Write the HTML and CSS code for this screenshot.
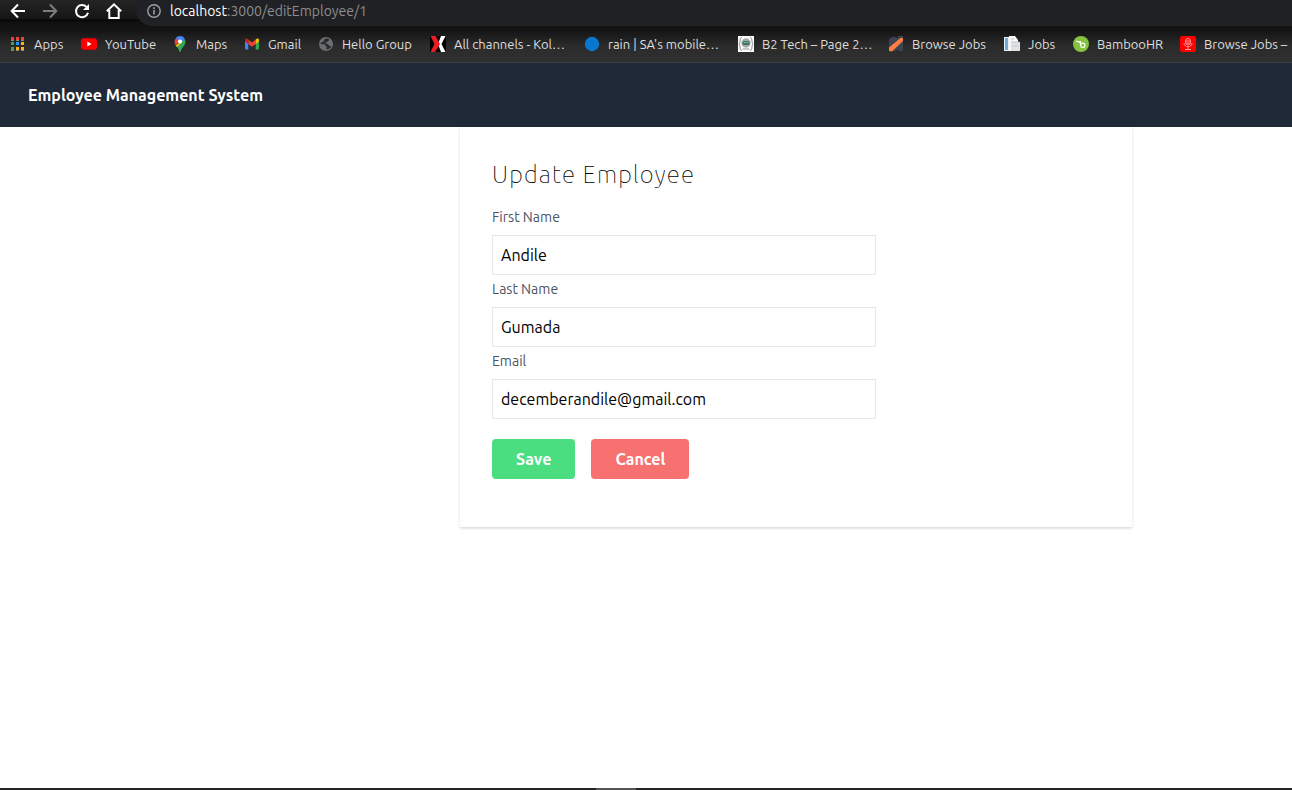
FILE: index.html
```html
<!DOCTYPE html>
<html lang="en">
<head>
<meta charset="utf-8">
<title>Update Employee</title>
<link rel="stylesheet" href="styles.css">
</head>
<body>
<div class="browser">
  <div class="toolbar">
    <button class="nav-btn" aria-label="Back"><svg viewBox="0 0 16 16"><path d="M15 8H2M8 1.500 1.700 8 8 14.500" fill="none" stroke="#fff" stroke-width="2"/></svg></button>
    <button class="nav-btn" aria-label="Forward"><svg viewBox="0 0 16 16"><path d="M1 8h13M8 1.500 14.300 8 8 14.500" fill="none" stroke="#7d7d7d" stroke-width="2"/></svg></button>
    <button class="nav-btn" aria-label="Reload"><svg viewBox="0 0 16 16"><path d="M14 9.800A6.100 6.100 0 1 1 12.500 3.900" fill="none" stroke="#fff" stroke-width="2"/><path d="M15 1v6H9z" fill="#fff"/></svg></button>
    <button class="nav-btn" aria-label="Home"><svg viewBox="0 0 16 16"><path d="M.8 8.300 8 1.400l7.200 6.900M3.300 7v8h9.400V7" fill="none" stroke="#fff" stroke-width="2"/></svg></button>
    <div class="address">
      <svg class="info" viewBox="0 0 14 14"><circle cx="7" cy="7" r="6.200" fill="none" stroke="#9aa0a6" stroke-width="1.400"/><path d="M6.200 6h1.600v4.500H6.200zM6.200 3.300h1.600v1.600H6.200z" fill="#9aa0a6"/></svg>
      <span class="url"><span class="host">localhost</span>:3000/editEmployee/1</span>
    </div>
  </div>
  <nav class="bookmarks" aria-label="Bookmarks">
    <a class="bookmark" href="#"><svg viewBox="0 0 16 16"><path d="M1 1h3v3H1zM6 1h3v3H6zM11 1h3v3h-3z" fill="#ea4335"/><path d="M1 6h3v3H1zM1 11h3v3H1z" fill="#34a853"/><path d="M6 6h3v3H6z" fill="#2196f3"/><path d="M11 6h3v3h-3zM6 11h3v3H6zM11 11h3v3h-3z" fill="#fbb411"/><path d="M1 4h3v1H1zM6 4h3v1H6zM11 4h3v1h-3zM1 14h3v1H1zM6 14h3v1H6zM11 14h3v1h-3z" fill="#888"/></svg><span>Apps</span></a>
    <a class="bookmark" href="#"><svg viewBox="0 0 16 16"><rect y="2.300" width="16" height="11.400" rx="3" fill="red"/><path d="M6.300 5.600 10.600 8l-4.300 2.400z" fill="#fff"/></svg><span>YouTube</span></a>
    <a class="bookmark" href="#"><svg viewBox="0 0 16 16"><path d="M3.600 9.200C5.200 11.500 6.700 12.400 7.100 15q.9 2 1.800 0c.4-3 4.700-5.200 4.500-9.500 0-1-.3-1.700-.6-2.300z" fill="#34a853"/><path d="M3.600 9.200 9.900 5.800l2.900-2.600L8 8 5 11z" fill="#fbbc04"/><path d="M3.800 2.200 8 5.500 3.600 9.200C2.200 6.800 2.300 4 3.800 2.200z" fill="#ea4335"/><path d="M3.800 2.200C6-.8 11.400-.7 12.800 3.200L9.500 6 6 4.500z" fill="#4285f4"/><circle cx="8" cy="5.500" r="2.100" fill="#fff"/></svg><span>Maps</span></a>
    <a class="bookmark" href="#"><svg viewBox="0 0 16 16"><path d="M1 4.500 4.300 7v6.500H2q-1 0-1-1z" fill="#4285f4"/><path d="M15 4.500 11.700 7v6.500H14q1 0 1-1z" fill="#34a853"/><path d="M4.300 3.500 8 6.400l3.700-2.900V8L8 10.700 4.300 8z" fill="#ea4335"/><path d="M1 4.200C1 2.300 3 2 4.300 3.500V8L1 5.600z" fill="#c5221f"/><path d="M15 4.200C15 2.300 13 2 11.700 3.500V8L15 5.600z" fill="#fbbc04"/></svg><span>Gmail</span></a>
    <a class="bookmark" href="#"><svg viewBox="0 0 16 16"><circle cx="8" cy="8" r="7" fill="#6b6e72"/><path d="M8.500 2.300c-.6 1-2.800 1-2.600 2.500.1 1-.8 1.100-2 1L2.300 8q3 .1 4.500.5c1.400.5.3 2 1.500 2.300 1 .3.500 1.700-.4 2.800 3 0 4.800-1.600 5.500-3.600-1.500.2-2.600-.4-3-1.500-.6-1.300-3-.4-2.700-1.800.3-1.500 2.800-.3 3-2 .1-1 .5-1.400 1.200-1.400z" fill="#2b2c2e"/></svg><span>Hello Group</span></a>
    <a class="bookmark" href="#"><svg viewBox="0 0 16 16"><path d="M0 0h16v16H0z" fill="#000"/><path d="M11 0h4.500L11.500 8l4 8H11L8 8z" fill="#fff"/><path d="M.5 0h5L10 8l-5 8H.5l4-8z" fill="#ed1c24"/></svg><span>All channels - Kol…</span></a>
    <a class="bookmark" href="#"><svg viewBox="0 0 16 16"><circle cx="8" cy="8" r="7.200" fill="#0877cf"/></svg><span>rain | SA's mobile…</span></a>
    <a class="bookmark" href="#"><svg viewBox="0 0 16 16"><path d="M0 0h16v16H0z" fill="#fff"/><path d="M4 1.500C1 1.500 3 6 1 8c2 2 0 6.500 3 6.500M12 1.500c3 0 1 4.500 3 6.500-2 2 0 6.500-3 6.500" fill="none" stroke="#888"/><circle cx="8" cy="7" r="4.700" fill="#a3ada9"/><rect x="4.500" y="5" width="7" height="4" rx="1.500" fill="#4a6b62"/><path d="M5.500 6h5v1h-5z" fill="#55c3a8"/><path d="M5 12h6l1 2H4z" fill="#c4cbc7"/></svg><span>B2 Tech – Page 2…</span></a>
    <a class="bookmark" href="#"><svg viewBox="0 0 16 16"><path d="M10 0h5v15h-5zM1 7a5 5 0 0 1 9-4v10a5 5 0 0 1-9-3z" fill="#3c444f"/><path d="M1 11.500 12.500 2H15v3L4 15.500 1 15z" fill="#ff7f45"/></svg><span>Browse Jobs</span></a>
    <a class="bookmark" href="#"><svg viewBox="0 0 16 16"><path d="M0 1h12v14H0z" fill="#e8f0f5"/><path d="M1 2h3v12H1z" fill="#70acd6"/><path d="M5 0h6l3 4v11H5z" fill="#f7f7f7"/><path d="M7 6h9v9H7z" fill="#e0e3e5"/><path d="M7 6h8M8 10h6M7 3h3" stroke="#c0c9cf"/></svg><span>Jobs</span></a>
    <a class="bookmark" href="#"><svg viewBox="0 0 16 16"><circle cx="8" cy="8" r="8" fill="#86c440"/><path d="M7.500 5v4.500M3 5.500c2.500-.5 3.800.5 4.500 2" fill="none" stroke="#fff" stroke-width="1.200"/><circle cx="9.700" cy="9.300" r="2.200" fill="none" stroke="#fff" stroke-width="1.200"/></svg><span>BambooHR</span></a>
    <a class="bookmark" href="#"><svg viewBox="0 0 16 16"><rect width="16" height="16" rx="2.500" fill="red"/><rect x="5.500" y="2.500" width="5" height="6.500" rx="2.500" fill="none" stroke="#ff9a9a"/><path d="M4 7c0 5 8 5 8 0M8 10.500V13M5 13.500h6M6 5h4M6 7h4" fill="none" stroke="#ff9a9a"/></svg><span>Browse Jobs – </span></a>
  </nav>
</div>
<header class="site-header">Employee Management System</header>
<main class="page">
  <form class="card">
    <h1 class="title">Update Employee</h1>
    <div class="field"><label for="first">First Name</label><input id="first" type="text" value="Andile"></div>
    <div class="field"><label for="last">Last Name</label><input id="last" type="text" value="Gumada"></div>
    <div class="field"><label for="email">Email</label><input id="email" type="email" value="decemberandile@gmail.com"></div>
    <div class="actions"><button class="btn save" type="button">Save</button><button class="btn cancel" type="button">Cancel</button></div>
  </form>
</main>
<footer class="dock"><div class="handle"></div></footer>
</body>
</html>
```
FILE: styles.css
```css
* { box-sizing: border-box; }
body {
  margin: 0;
  min-height: 100vh;
  display: flex;
  flex-direction: column;
  background: #fff;
  font-family: Ubuntu, "Noto Sans", "Open Sans", sans-serif;
  font-size: 16px;
  line-height: 24px;
  overflow-x: hidden;
}
button, input { font: inherit; }
.browser {
  height: 63px;
  background: linear-gradient(#242424 0, #161616 19px, #050505 20px, #101010 22px, #141414 30px, #2b2b2b 46px, #303030 100%);
  border-bottom: 1px solid #3c3d3e;
}
.toolbar {
  display: flex;
  height: 26px;
  padding-left: 10px;
  gap: 16px;
}
.nav-btn {
  width: 16px;
  height: 22px;
  padding: 3px 0;
  border: 0;
  background: none;
}
.nav-btn svg { display: block; width: 16px; height: 16px; }
.address {
  flex: 1;
  display: flex;
  gap: 9px;
  margin-left: -2px;
  padding: 4px 0 8px 11px;
  align-items: center;
  background: #202124;
  border-bottom-left-radius: 16px;
}
.info { width: 14px; height: 14px; }
.url { color: #8b8e92; font-size: 14px; line-height: 14px; }
.host { color: #fff; }
.bookmarks {
  display: grid;
  grid-template-columns: 71px 91px 72px 74px 112px 154px 154px 150px 116px 69px 107px 1fr;
  height: 36px;
  padding-left: 10px;
  align-items: center;
  overflow: hidden;
}
.bookmark {
  display: flex;
  align-items: center;
  gap: 8px;
  min-width: 0;
  color: #dedede;
  font-size: 13px;
  line-height: 20px;
  text-decoration: none;
  white-space: nowrap;
}
.bookmark svg { flex: none; width: 16px; height: 16px; }
.site-header {
  padding: 20px 28px;
  background: #1f2937;
  color: #fff;
  font-weight: 700;
}
.page { flex: 1; }
.card {
  max-width: 672px;
  margin: 0 160px 0 auto;
  padding: 32px 32px 48px;
  background: #fff;
  box-shadow: 0 1px 3px rgba(0, 0, 0, .1), 0 2px 2px rgba(0, 0, 0, .06);
}
.title {
  margin: 0 0 12px;
  font-size: 24px;
  line-height: 32px;
  font-weight: 100;
  letter-spacing: .05em;
}
.field {
  display: flex;
  flex-direction: column;
  gap: 8px;
  padding-top: 4px;
}
.field label { color: #4b5563; font-size: 14px; line-height: 20px; }
.field input {
  width: 384px;
  max-width: 100%;
  height: 40px;
  padding: 8px;
  border: 1px solid #e5e7eb;
  background: #fff;
  color: #000;
}
.actions { display: flex; gap: 16px; padding-top: 20px; }
.btn {
  padding: 8px 24px;
  border: 0;
  border-radius: 4px;
  color: #fff;
  font-weight: 700;
}
.save { background: #4ade80; }
.cancel { background: #f87171; }
.dock { display: flex; justify-content: center; height: 2px; padding-right: 60px; background: #242424; }
.handle { width: 40px; background: #555; }
```
